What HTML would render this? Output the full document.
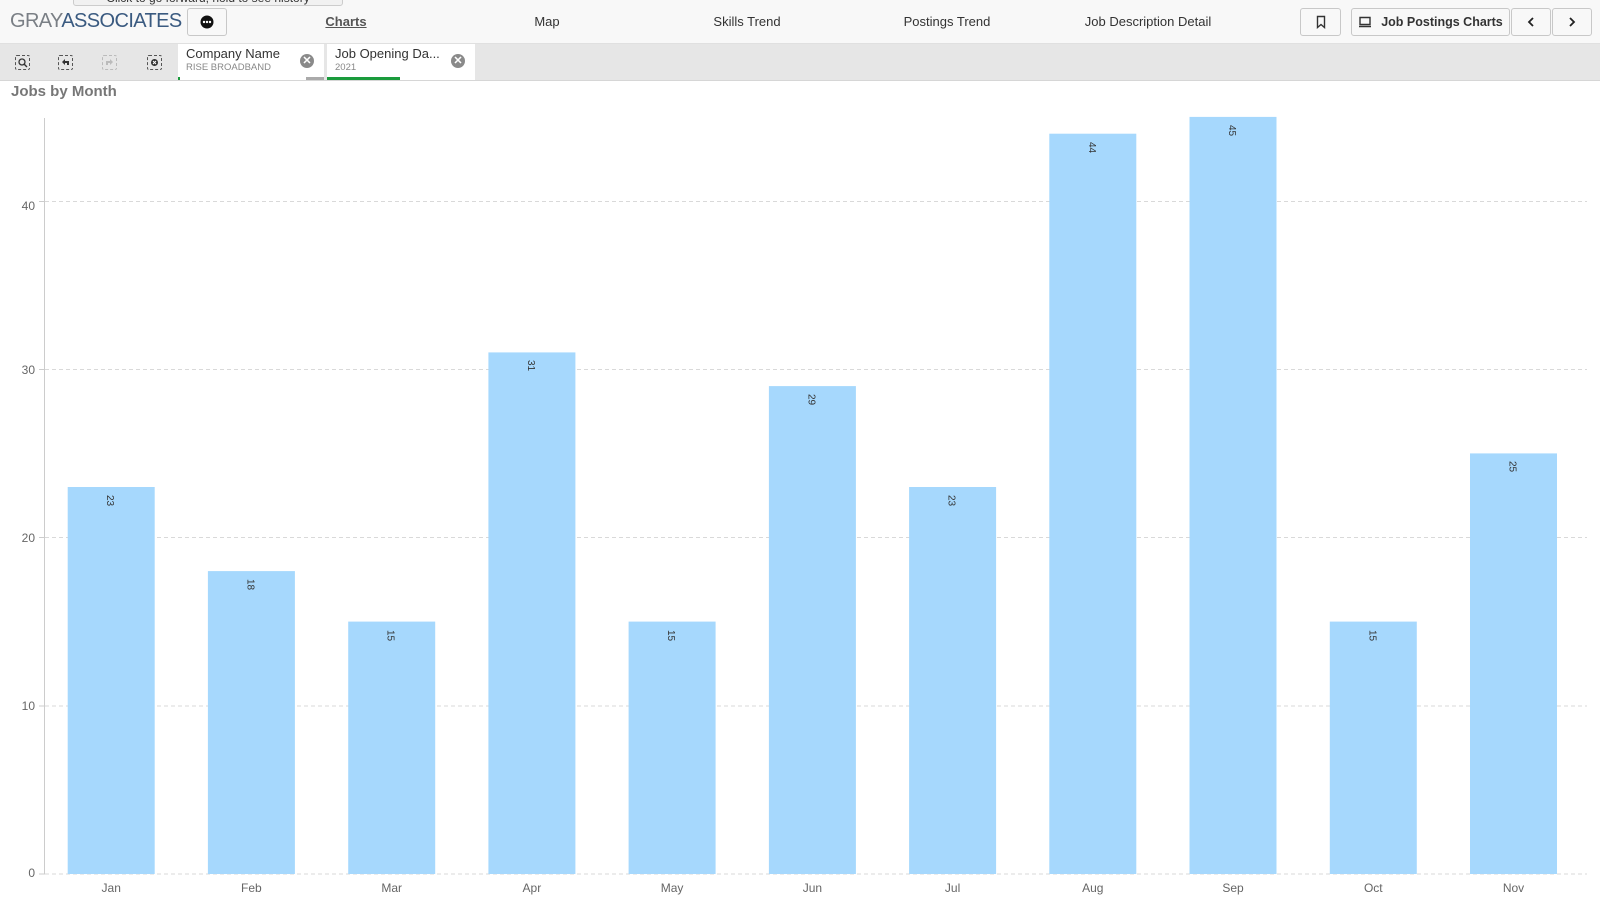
<!DOCTYPE html>
<html><head><meta charset="utf-8"><style>
*{margin:0;padding:0;box-sizing:border-box}
body{width:1600px;height:905px;overflow:hidden;background:#fff;font-family:"Liberation Sans",sans-serif;position:relative;color:#404040}
.hdr{position:absolute;left:0;top:0;width:1600px;height:44px;background:#f8f8f8;border-bottom:1px solid #e0e0e0}
.tip{position:absolute;left:73px;top:-9px;width:270px;height:15px;background:#f1f1f1;border:1px solid #ccc;border-radius:3px;font-size:12px;color:#333;text-align:center;line-height:12px;overflow:hidden}
.logo{position:absolute;left:10px;top:10px;font-size:20px;letter-spacing:-0.6px;white-space:nowrap}
.logo .g{color:#7a7f85}.logo .a{color:#3a5a80}
.btn{position:absolute;top:8px;height:28px;border:1px solid #c8c8c8;border-radius:3px;background:#f8f8f8;display:flex;align-items:center;justify-content:center;font-size:13px;color:#333}
.nav{position:absolute;top:14px;font-size:13px;color:#333;transform:translateX(-50%);white-space:nowrap}
.fbar{position:absolute;left:0;top:44px;width:1600px;height:37px;background:#e6e6e6;border-bottom:1px solid #d6d6d6}
.ic{position:absolute;top:11px;width:15px;height:15px;border:1.3px dashed #555;border-radius:2px}
.chip{position:absolute;top:0;height:36px;background:#fff;padding:2px 8px}
.chip .t{font-size:13px;color:#333;line-height:16px}
.chip .s{font-size:9.5px;color:#888;line-height:12px}
.x{position:absolute;right:10px;top:10px;width:14px;height:14px;border-radius:50%;background:#8a8a8a;color:#fff;font-size:11px;line-height:14px;text-align:center;font-weight:bold}
.title{position:absolute;left:11px;top:83px;font-size:15px;font-weight:bold;color:#777}
</style></head><body>
<div class="hdr">
<div class="logo"><span class="g">GRAY</span><span class="a">ASSOCIATES</span></div>
<div class="btn" style="left:187px;width:40px"><svg width="14" height="14"><circle cx="7" cy="7" r="6.5" fill="#111"/><circle cx="4" cy="7" r="1.2" fill="#fff"/><circle cx="7" cy="7" r="1.2" fill="#fff"/><circle cx="10" cy="7" r="1.2" fill="#fff"/></svg></div>
<div class="nav" style="left:346px;text-decoration:underline;font-weight:bold;color:#555">Charts</div>
<div class="nav" style="left:547px">Map</div>
<div class="nav" style="left:747px">Skills Trend</div>
<div class="nav" style="left:947px">Postings Trend</div>
<div class="nav" style="left:1148px">Job Description Detail</div>
<div class="btn" style="left:1300px;width:41px"><svg width="12" height="14"><path d="M2.5 1.5h7v11l-3.5-3-3.5 3z" fill="none" stroke="#333" stroke-width="1.4"/></svg></div>
<div class="btn" style="left:1351px;width:159px;font-weight:bold;font-size:12.5px"><svg width="14" height="12" style="margin-right:9px"><path d="M2 1.5h10v7H2zM1 10.5h12" fill="none" stroke="#333" stroke-width="1.4"/></svg>Job Postings Charts</div>
<div class="btn" style="left:1511px;width:40px"><svg width="10" height="12"><path d="M7 2L3 6l4 4" fill="none" stroke="#222" stroke-width="1.8"/></svg></div>
<div class="btn" style="left:1552px;width:40px"><svg width="10" height="12"><path d="M3 2l4 4-4 4" fill="none" stroke="#222" stroke-width="1.8"/></svg></div>
</div>
<div class="tip">Click to go forward, hold to see history</div>
<div class="fbar">
<div class="ic" style="left:15px"><svg width="13" height="13" style="position:absolute;left:0;top:0"><circle cx="6" cy="6" r="3" fill="none" stroke="#333" stroke-width="1.3"/><path d="M8 8l3 3" stroke="#333" stroke-width="1.4"/></svg></div>
<div class="ic" style="left:58px"><svg width="13" height="13" style="position:absolute;left:0;top:0"><path d="M3 6l3-3v2h4v4H8V7H6v2z" fill="#333"/></svg></div>
<div class="ic" style="left:102px;border-color:#bbb"><svg width="13" height="13" style="position:absolute;left:0;top:0"><path d="M10 6L7 3v2H3v4h2V7h2v2z" fill="#bbb"/></svg></div>
<div class="ic" style="left:147px"><svg width="13" height="13" style="position:absolute;left:0;top:0"><circle cx="6.5" cy="6.5" r="3.5" fill="#333"/><path d="M5 5l3 3M8 5l-3 3" stroke="#fff" stroke-width="1"/></svg></div>
<div class="chip" style="left:178px;width:146px"><div class="t">Company Name</div><div class="s">RISE BROADBAND</div><div class="x">✕</div>
<div style="position:absolute;left:0;bottom:0;width:2px;height:3px;background:#1a9b3c"></div><div style="position:absolute;right:0;bottom:0;width:18px;height:3px;background:#aaa"></div></div>
<div class="chip" style="left:327px;width:148px"><div class="t">Job Opening Da...</div><div class="s">2021</div><div class="x">✕</div>
<div style="position:absolute;left:0;bottom:0;width:73px;height:3px;background:#1a9b3c"></div></div>
</div>
<div class="title">Jobs by Month</div>
<svg width="1600" height="905" style="position:absolute;left:0;top:0" font-family="Liberation Sans, sans-serif">
<g stroke="#d9d9d9" stroke-dasharray="4,3" stroke-width="1">
<line x1="45" y1="201.5" x2="1587" y2="201.5"/><line x1="45" y1="369.5" x2="1587" y2="369.5"/><line x1="45" y1="537.5" x2="1587" y2="537.5"/><line x1="45" y1="706" x2="1587" y2="706"/><line x1="45" y1="874" x2="1587" y2="874"/>
</g>
<line x1="44.5" y1="118" x2="44.5" y2="874" stroke="#ccc"/>
<g stroke="#ccc"><line x1="39" y1="201.5" x2="45" y2="201.5"/><line x1="39" y1="369.5" x2="45" y2="369.5"/><line x1="39" y1="537.5" x2="45" y2="537.5"/><line x1="39" y1="706" x2="45" y2="706"/><line x1="39" y1="874" x2="45" y2="874"/></g>
<g font-size="12" fill="#666" text-anchor="end">
<text x="35" y="210">40</text><text x="35" y="374">30</text><text x="35" y="542">20</text><text x="35" y="710">10</text><text x="35" y="877">0</text>
</g>
<g fill="#a6d8fd">
<rect x="67.7" y="487" width="87" height="387"/>
<rect x="207.9" y="571.1" width="87" height="302.9"/>
<rect x="348.2" y="621.6" width="87" height="252.4"/>
<rect x="488.4" y="352.4" width="87" height="521.6"/>
<rect x="628.6" y="621.6" width="87" height="252.4"/>
<rect x="768.9" y="386.1" width="87" height="487.9"/>
<rect x="909.1" y="487" width="87" height="387"/>
<rect x="1049.3" y="133.7" width="87" height="740.3"/>
<rect x="1189.5" y="116.9" width="87" height="757.1"/>
<rect x="1329.8" y="621.6" width="87" height="252.4"/>
<rect x="1470" y="453.4" width="87" height="420.6"/>
</g>
<g font-size="10" fill="#333">
<text transform="translate(107.2,495) rotate(90)">23</text>
<text transform="translate(247.4,579) rotate(90)">18</text>
<text transform="translate(387.7,630) rotate(90)">15</text>
<text transform="translate(527.9,360) rotate(90)">31</text>
<text transform="translate(668.1,630) rotate(90)">15</text>
<text transform="translate(808.4,394) rotate(90)">29</text>
<text transform="translate(948.6,495) rotate(90)">23</text>
<text transform="translate(1088.8,142) rotate(90)">44</text>
<text transform="translate(1229,125) rotate(90)">45</text>
<text transform="translate(1369.3,630) rotate(90)">15</text>
<text transform="translate(1509.5,461) rotate(90)">25</text>
</g>
<g font-size="12" fill="#666" text-anchor="middle">
<text x="111.2" y="892">Jan</text><text x="251.4" y="892">Feb</text><text x="391.7" y="892">Mar</text><text x="531.9" y="892">Apr</text><text x="672.1" y="892">May</text><text x="812.4" y="892">Jun</text><text x="952.6" y="892">Jul</text><text x="1092.8" y="892">Aug</text><text x="1233" y="892">Sep</text><text x="1373.3" y="892">Oct</text><text x="1513.5" y="892">Nov</text>
</g>
</svg>
</body></html>
